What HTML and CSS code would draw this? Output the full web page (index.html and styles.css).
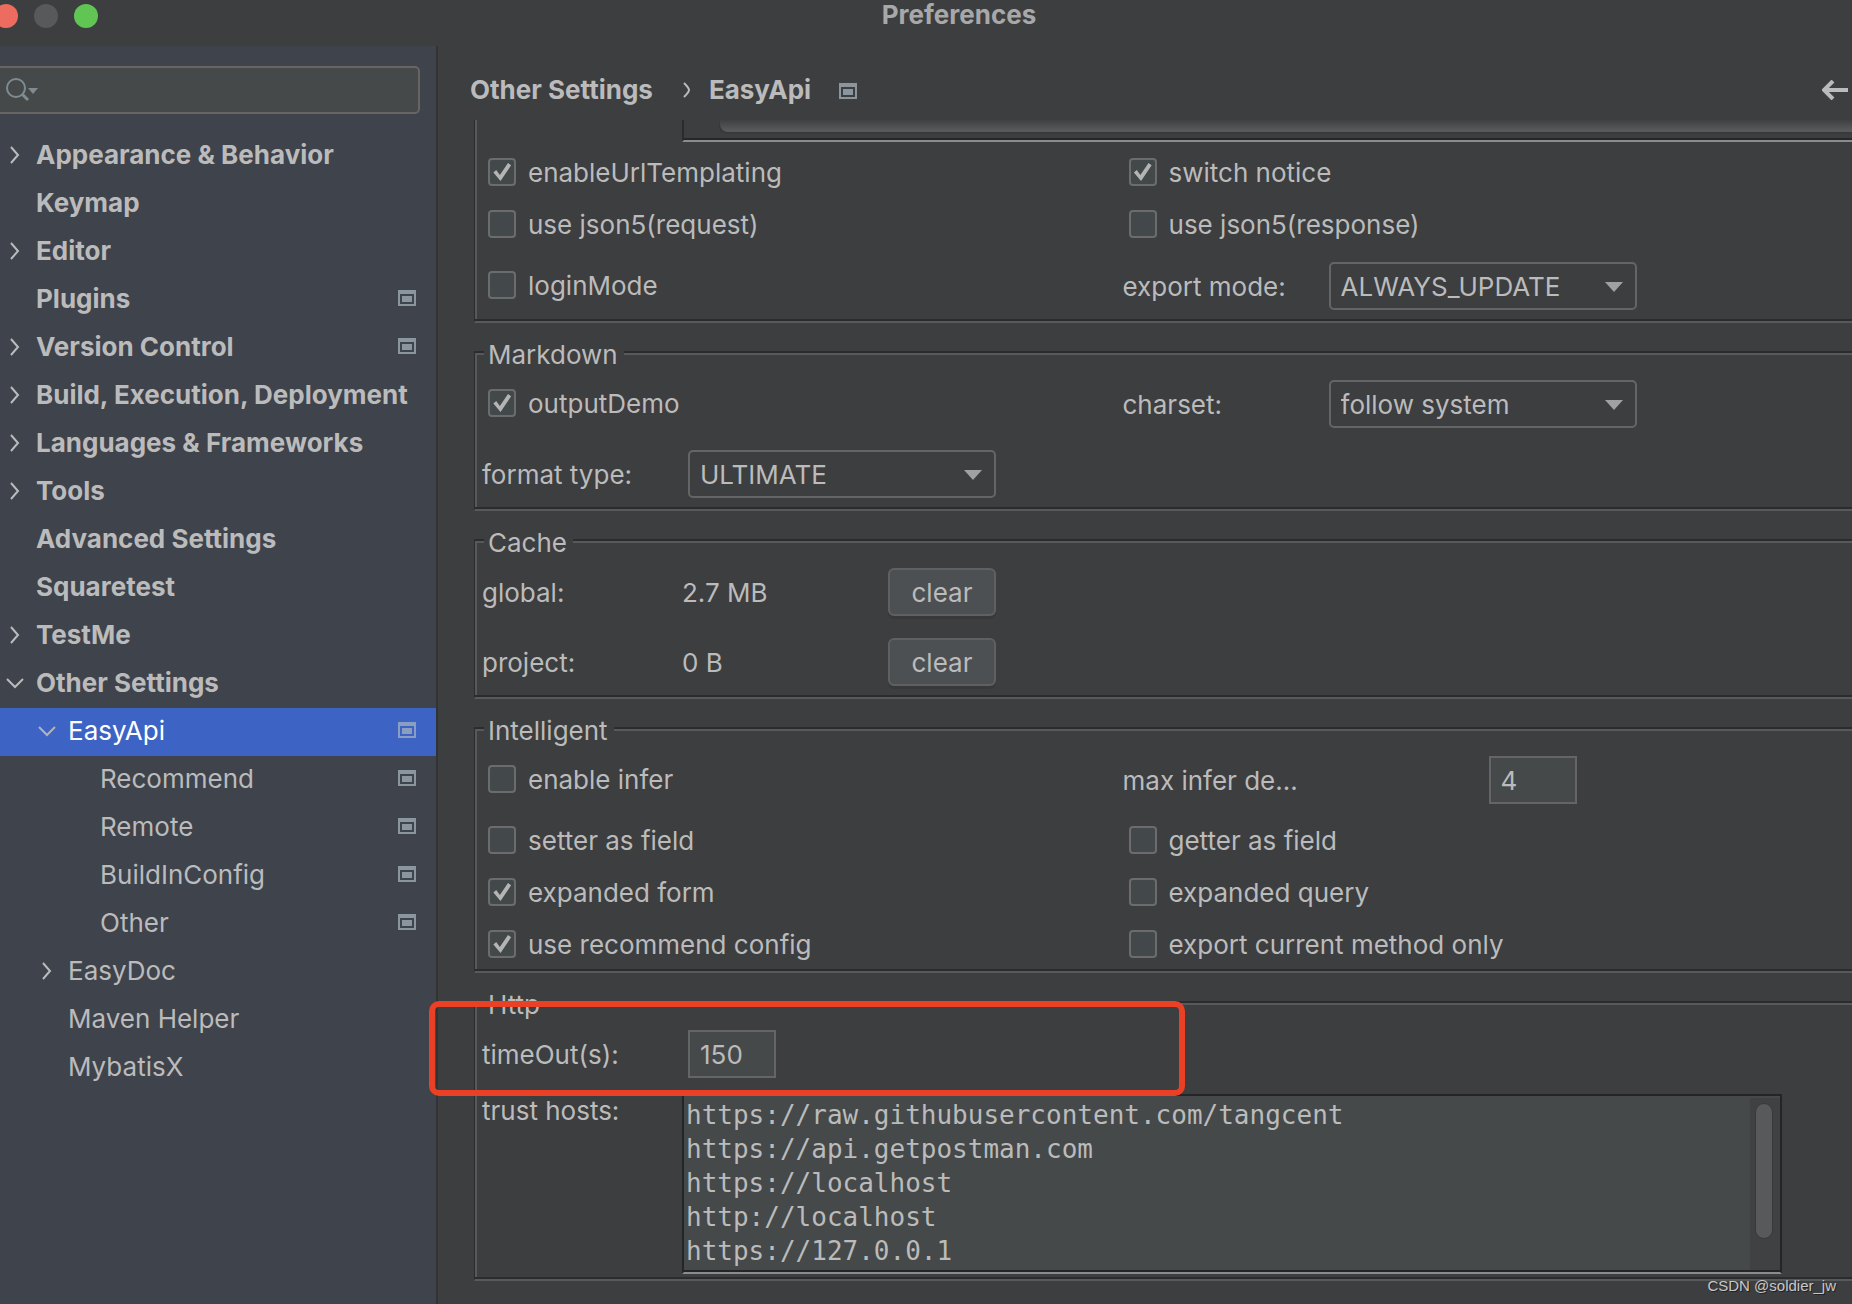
FILE: index.html
```html
<!DOCTYPE html>
<html lang="en">
<head>
<meta charset="utf-8">
<title>Preferences</title>
<link rel="stylesheet" href="styles.css">
</head>
<body>
<svg class="defs" aria-hidden="true">
  <symbol id="right" viewBox="0 0 24 24"><path d="M8 4l7 8-7 8" fill="none" stroke="currentColor" stroke-width="2"/></symbol>
  <symbol id="down" viewBox="0 0 24 24"><path d="M4 8l8 8 8-8" fill="none" stroke="currentColor" stroke-width="2"/></symbol>
  <symbol id="project" viewBox="0 0 18 20"><path d="M0 0h18v16H0zM2 4v10h14V4zM4 6h10v6H4z" fill="currentColor" fill-rule="evenodd"/></symbol>
  <symbol id="caret" viewBox="0 0 18 10"><path d="M0 0h18l-9 10z" fill="currentColor"/></symbol>
</svg>

<header class="titlebar">
  <div class="lights"><span class="light close"></span><span class="light minimize"></span><span class="light zoom"></span></div>
  <h1 class="title">Preferences</h1>
</header>

<div class="window">
  <aside class="sidebar">
    <div class="search">
      <svg class="search-icon" viewBox="0 0 34 26" aria-hidden="true"><circle cx="11" cy="11" r="9" fill="none" stroke="currentColor" stroke-width="2"/><path d="M17 17l6 6" stroke="currentColor" stroke-width="3"/><path d="M23 11h10l-5 6z" fill="currentColor"/></svg>
      <input class="search-input" type="text" aria-label="Search settings">
    </div>
    <nav>
      <ul class="tree">
        <li><a class="row" href="#"><svg class="arrow"><use href="#right"/></svg>Appearance &amp; Behavior</a></li>
        <li><a class="row" href="#"><span class="arrow"></span>Keymap</a></li>
        <li><a class="row" href="#"><svg class="arrow"><use href="#right"/></svg>Editor</a></li>
        <li><a class="row" href="#"><span class="arrow"></span>Plugins<svg class="project"><use href="#project"/></svg></a></li>
        <li><a class="row" href="#"><svg class="arrow"><use href="#right"/></svg>Version Control<svg class="project"><use href="#project"/></svg></a></li>
        <li><a class="row" href="#"><svg class="arrow"><use href="#right"/></svg>Build, Execution, Deployment</a></li>
        <li><a class="row" href="#"><svg class="arrow"><use href="#right"/></svg>Languages &amp; Frameworks</a></li>
        <li><a class="row" href="#"><svg class="arrow"><use href="#right"/></svg>Tools</a></li>
        <li><a class="row" href="#"><span class="arrow"></span>Advanced Settings</a></li>
        <li><a class="row" href="#"><span class="arrow"></span>Squaretest</a></li>
        <li><a class="row" href="#"><svg class="arrow"><use href="#right"/></svg>TestMe</a></li>
        <li><a class="row" href="#"><svg class="arrow"><use href="#down"/></svg>Other Settings</a>
          <ul class="level-1">
            <li><a class="row selected" href="#"><svg class="arrow"><use href="#down"/></svg>EasyApi<svg class="project"><use href="#project"/></svg></a>
              <ul class="level-2">
                <li><a class="row" href="#"><span class="arrow"></span>Recommend<svg class="project"><use href="#project"/></svg></a></li>
                <li><a class="row" href="#"><span class="arrow"></span>Remote<svg class="project"><use href="#project"/></svg></a></li>
                <li><a class="row" href="#"><span class="arrow"></span>BuildInConfig<svg class="project"><use href="#project"/></svg></a></li>
                <li><a class="row" href="#"><span class="arrow"></span>Other<svg class="project"><use href="#project"/></svg></a></li>
              </ul>
            </li>
            <li><a class="row" href="#"><svg class="arrow"><use href="#right"/></svg>EasyDoc</a></li>
            <li><a class="row" href="#"><span class="arrow"></span>Maven Helper</a></li>
            <li><a class="row" href="#"><span class="arrow"></span>MybatisX</a></li>
          </ul>
        </li>
      </ul>
    </nav>
  </aside>

  <main class="main">
    <div class="crumbs">
      <a href="#">Other Settings</a>
      <svg class="crumb-sep" viewBox="0 0 8 16" aria-hidden="true"><path d="M1 1q5 5 5 7t-5 7" fill="none" stroke="currentColor" stroke-width="2"/></svg>
      <a href="#">EasyApi</a>
      <svg class="project"><use href="#project"/></svg>
      <button class="back" type="button" aria-label="Back"><svg viewBox="0 0 26 20" aria-hidden="true"><path d="M11 1L2 10l9 9M2 10h24" fill="none" stroke="currentColor" stroke-width="4"/></svg></button>
    </div>

    <form class="form">
      <fieldset class="group continued" aria-label="General">
        <div class="hscroll"><div class="hthumb"></div></div>
        <div class="grid">
          <label class="check"><input type="checkbox" checked>enableUrlTemplating</label>
          <label class="check"><input type="checkbox" checked>switch notice</label>
          <label class="check"><input type="checkbox">use json5(request)</label>
          <label class="check"><input type="checkbox">use json5(response)</label>
          <label class="check"><input type="checkbox">loginMode</label>
          <div class="field"><label class="name" for="mode">export mode:</label>
            <div class="select"><select id="mode"><option>ALWAYS_UPDATE</option></select><svg class="caret"><use href="#caret"/></svg></div></div>
        </div>
      </fieldset>

      <fieldset class="group">
        <legend>Markdown</legend>
        <div class="grid">
          <label class="check"><input type="checkbox" checked>outputDemo</label>
          <div class="field"><label class="name" for="charset">charset:</label>
            <div class="select"><select id="charset"><option>follow system</option></select><svg class="caret"><use href="#caret"/></svg></div></div>
          <div class="field"><label class="name" for="format">format type:</label>
            <div class="select"><select id="format"><option>ULTIMATE</option></select><svg class="caret"><use href="#caret"/></svg></div></div>
        </div>
      </fieldset>

      <fieldset class="group">
        <legend>Cache</legend>
        <div class="grid single">
          <div class="field"><span class="name value">global:</span><span class="name">2.7 MB</span><button class="button" type="button">clear</button></div>
          <div class="field"><span class="name value">project:</span><span class="name">0 B</span><button class="button" type="button">clear</button></div>
        </div>
      </fieldset>

      <fieldset class="group">
        <legend>Intelligent</legend>
        <div class="grid">
          <label class="check"><input type="checkbox">enable infer</label>
          <div class="field"><label class="name wide" for="depth">max infer de...</label><input class="number" id="depth" type="text" value="4"></div>
          <label class="check"><input type="checkbox">setter as field</label>
          <label class="check"><input type="checkbox">getter as field</label>
          <label class="check"><input type="checkbox" checked>expanded form</label>
          <label class="check"><input type="checkbox">expanded query</label>
          <label class="check"><input type="checkbox" checked>use recommend config</label>
          <label class="check"><input type="checkbox">export current method only</label>
        </div>
      </fieldset>

      <fieldset class="group http">
        <legend>Http</legend>
        <div class="grid single">
          <div class="field marked"><label class="name" for="timeout">timeOut(s):</label><input class="number" id="timeout" type="text" value="150"><span class="marker"></span></div>
          <div class="field top"><label class="name value" for="hosts">trust hosts:</label>
            <div class="hosts"><textarea id="hosts" rows="5" spellcheck="false">https://raw.githubusercontent.com/tangcent
https://api.getpostman.com
https://localhost
http://localhost
https://127.0.0.1</textarea><div class="vscroll"><div class="vthumb"></div></div></div></div>
        </div>
      </fieldset>
    </form>
  </main>
</div>
<div class="watermark">CSDN @soldier_jw</div>
</body>
</html>
```
FILE: styles.css
```css
* { box-sizing: border-box; }

:root {
  --bg: #3d3e40;
  --side: #3f434c;
  --text: #bbbbbb;
  --field: #45494a;
  --line: #646566;
  --etch-dark: #2b2c2e;
  --etch-light: #58595b;
}

body {
  margin: 0;
  min-height: 100vh;
  display: flex;
  flex-direction: column;
  position: relative;
  overflow: hidden;
  background: var(--bg);
  color: var(--text);
  font: 26px/30px Inter, "Liberation Sans", sans-serif;
}

input, select, button, textarea { font: inherit; color: inherit; margin: 0; }
a { color: inherit; text-decoration: none; }
ul { list-style: none; margin: 0; padding: 0; }
svg { display: block; flex: none; }
.defs { display: none; }

/* Title bar */
.titlebar { display: flex; height: 46px; position: relative; }
.lights { position: absolute; left: -6px; top: 4px; display: flex; gap: 16px; }
.light { width: 24px; height: 24px; border-radius: 50%; }
.close { background: #ed6b5f; }
.minimize { background: #58595b; }
.zoom { background: #61c554; }
.title { flex: 1; margin: 0; padding-left: 66px; text-align: center; font-size: 26px; font-weight: 700; line-height: 30px; color: #a8a8a9; }

.window { flex: 1; display: flex; }

/* Sidebar */
.sidebar { flex: none; width: 438px; padding-top: 20px; background: var(--side); border-right: 2px solid #323334; }
.search { display: flex; align-items: center; height: 48px; margin-right: 16px; padding-left: 5px; background: var(--field); border: 2px solid #686462; border-left: 0; border-radius: 0 5px 5px 0; }
.search-icon { width: 34px; height: 26px; color: #7f8b91; }
.search-input { flex: 1; min-width: 0; background: none; border: 0; outline: 0; }
.tree { padding-top: 18px; font-weight: 700; }
.level-1 { font-weight: 400; }
.row { display: flex; align-items: center; gap: 9px; height: 48px; padding: 0 20px 2px 3px; white-space: nowrap; }
.level-1 .row { padding-left: 35px; }
.level-2 .row { padding-left: 67px; }
.arrow { flex: none; width: 24px; height: 24px; }
.project { width: 18px; height: 20px; color: #8a959d; }
.row .project { margin: 2px 0 0 auto; }
.selected { background: #3d63c4; color: #fff; }
.selected .arrow { color: #b0b4bb; }
.selected .project { color: #8b9dc0; }

/* Settings page */
.main { flex: 1; min-width: 0; }
.crumbs { display: flex; align-items: center; height: 74px; padding: 14px 4px 0 32px; font-weight: 700; }
.crumb-sep { width: 8px; height: 16px; margin: 0 18px 0 30px; }
.crumbs .project { margin: 6px 0 0 28px; }
.back { margin-left: auto; padding: 0; background: none; border: 0; }
.back svg { width: 26px; height: 20px; }

.form { padding-left: 36px; }

/* Titled groups with an etched two-tone outline */
.group {
  min-width: 0;
  margin: 14px 0 0;
  padding: 0 0 0 7px;
  border: 2px solid var(--etch-dark);
  border-left-width: 1px;
  border-right: 0;
  border-bottom-color: var(--etch-light);
  box-shadow: inset 0 -2px var(--etch-dark), inset 2px 2px var(--etch-light);
}
.continued { margin-top: 0; border-top: 0; box-shadow: inset 0 -2px var(--etch-dark), inset 2px 0 var(--etch-light); }
legend { height: 30px; margin-left: 2px; padding: 4px 6px 0 4px; line-height: 28px; background: var(--bg); }
.grid { display: grid; grid-template-columns: 36fr 41fr; row-gap: 22px; align-items: center; padding: 13px 0 11px; }
.continued .grid { padding-top: 16px; }
.single { grid-template-columns: 1fr; }
.http .grid { row-gap: 16px; padding-bottom: 5px; }

.hscroll { height: 22px; margin-left: 200px; padding-left: 36px; border-left: 2px solid #2a2b2d; border-bottom: 2px solid #8b8c8d; box-shadow: inset 0 -2px #262729; }
.hthumb { height: 12px; border-radius: 0 0 0 8px; background: linear-gradient(#3f4042, #58595b 10px); box-shadow: -1px 2px #38393a; }

.check { display: flex; align-items: flex-start; gap: 12px; height: 30px; padding-left: 6px; white-space: nowrap; }
.check input { appearance: none; flex: none; width: 28px; height: 28px; background: #43494a; border: 2px solid #6b6c6d; border-radius: 4px; }
.check input:checked::before { content: ""; display: block; width: 24px; height: 24px; background: #b4b4b4; clip-path: polygon(14% 52%, 26% 42%, 41% 62%, 75% 12%, 88% 22%, 44% 88%); }

.field { display: flex; align-items: center; }
.name { flex: none; width: 206px; padding-top: 2px; white-space: nowrap; }
.value { width: 200px; }
.wide { width: 366px; }
.select { position: relative; width: 308px; }
.select select { appearance: none; width: 100%; height: 48px; padding: 2px 48px 0 10px; background: none; border: 2px solid var(--line); border-radius: 5px; }
.caret { position: absolute; right: 14px; top: 20px; width: 18px; height: 10px; color: #9fa1a3; pointer-events: none; }
.button { width: 108px; height: 48px; padding: 2px 0 0; background: #4c5052; border: 2px solid #5e6061; border-radius: 6px; box-shadow: 0 3px #38393b; }
.number { width: 88px; height: 48px; padding: 0 10px; background: var(--field); border: 2px solid var(--line); border-radius: 0; }

.marked { position: relative; }
.marker { position: absolute; left: -53px; top: -29px; width: 756px; height: 95px; border: 6px solid #ea4025; border-radius: 10px; pointer-events: none; }

.top { align-items: flex-start; }
.hosts { flex: 1; display: flex; height: 180px; margin-right: 70px; padding: 2px 0 2px 2px; background: var(--field); border: 2px solid #242527; border-bottom: 2px solid #8b8c8d; box-shadow: inset 0 -2px #242527; }
.hosts textarea { flex: 1; min-width: 0; height: 174px; padding: 0; background: none; border: 0; outline: 0; resize: none; overflow: hidden; white-space: pre; font: 26px/34px "DejaVu Sans Mono", "Liberation Mono", monospace; }
.vscroll { width: 30px; padding: 5px 7px 0 5px; background: #404143; }
.vthumb { height: 136px; border-radius: 9px; background: #58595b; border: 1px solid #38393a; }

.watermark { position: absolute; right: 16px; bottom: 8px; font: 15px/20px "Liberation Sans", sans-serif; color: #c8c8c8; text-shadow: 1px 1px #222; }
```
